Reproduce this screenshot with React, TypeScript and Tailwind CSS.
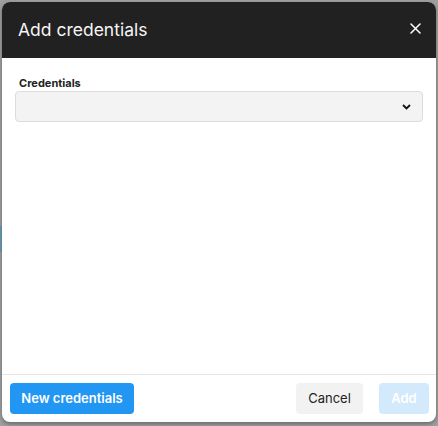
import React from "react";

export default function App() {
  return (
    <div className="w-[438px] h-[426px] bg-[#9f9f9f] relative overflow-hidden" style={{ fontFamily: "Inter, 'Liberation Sans', sans-serif" }}>
      <div className="absolute left-0 top-[226px] w-[2px] h-[26px] bg-[#6c9db2]" />
      <div className="absolute left-[2px] top-[2px] w-[434px] h-[420px] bg-white rounded-[8px] overflow-hidden flex flex-col shadow-[0_2px_4px_rgba(0,0,0,0.35)]">
        <div className="h-[56px] bg-[#212121] flex items-center justify-between pl-[16px] pr-[15px] shrink-0">
          <span className="text-[#f5f5f5] text-[17.5px] font-normal leading-none">Add credentials</span>
          <svg width="11" height="11" viewBox="0 0 11 11" className="mb-[4px] ml-[2px]">
            <path d="M1 1L10 10M10 1L1 10" stroke="#ffffff" strokeWidth="1.5" strokeLinecap="round" />
          </svg>
        </div>
        <div className="flex-1 px-[13px] pt-[18px]">
          <div className="text-[11px] font-bold text-[#222] pl-[4px] leading-[14px]">Credentials</div>
          <div className="mt-[1px] h-[31px] bg-[#f3f3f3] border border-[#dcdcdc] rounded-[4px] flex items-center justify-end pr-[11px]">
            <svg width="9" height="6" viewBox="0 0 9 6">
              <path d="M1 1L4.5 4.5L8 1" stroke="#111" strokeWidth="1.8" fill="none" />
            </svg>
          </div>
        </div>
        <div className="h-[48px] border-t border-[#e6e6e6] flex items-center pl-[8px] pr-[7px] shrink-0">
          <button className="h-[31px] w-[124px] rounded-[4px] bg-[#2196f3] text-white text-[13px] font-semibold">New credentials</button>
          <div className="flex-1" />
          <button className="h-[31px] w-[67px] rounded-[4px] bg-[#f2f2f2] text-[#222] text-[13px]">Cancel</button>
          <button className="ml-[16px] h-[31px] w-[50px] rounded-[4px] bg-[#d3e9fc] text-white text-[13px] font-semibold">Add</button>
        </div>
      </div>
    </div>
  );
}
